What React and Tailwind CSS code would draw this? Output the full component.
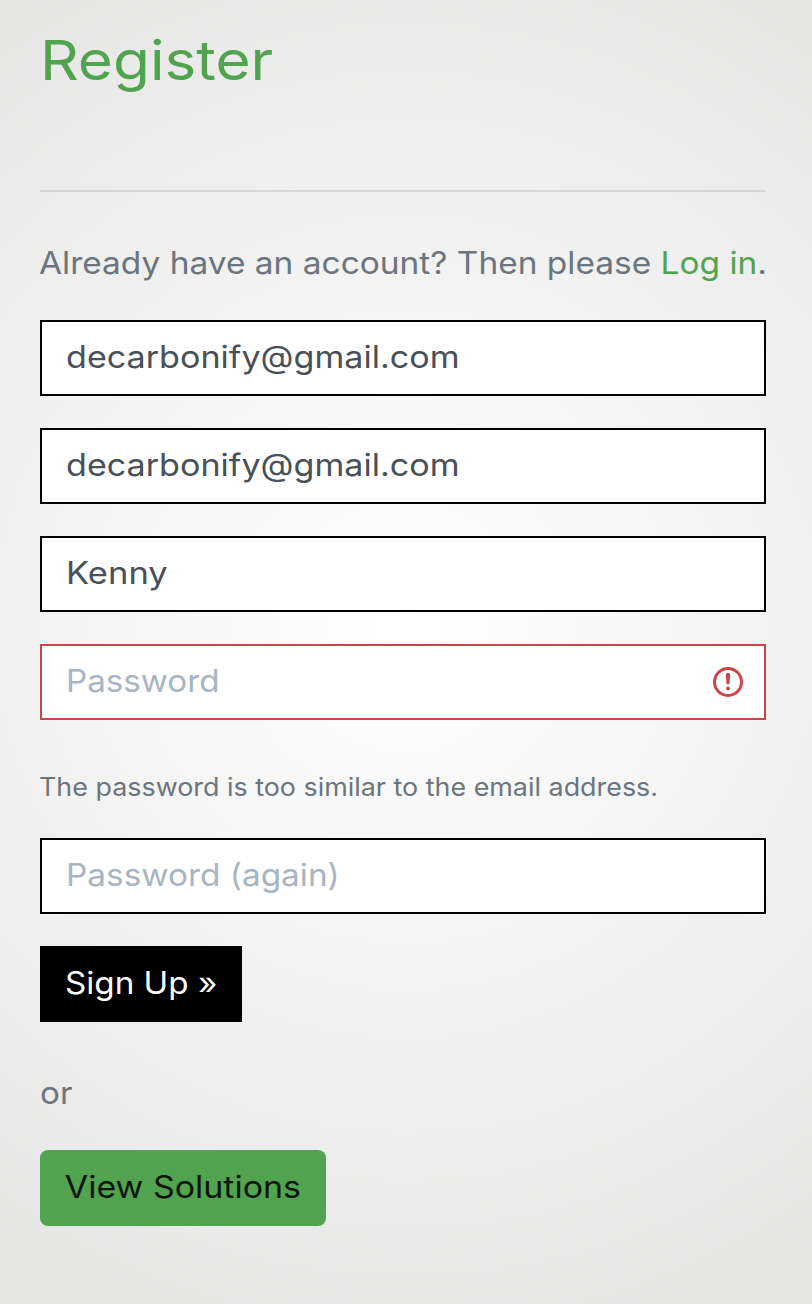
function Field({ type = "text", invalid = false, className = "", ...props }) {
  return (
    <div className={`relative h-[76px] border-2 bg-white pl-6 ${invalid ? "border-[#cb444a]" : "border-black"}`}>
      <input
        type={type}
        className={`block h-[72px] w-[560px] origin-left bg-transparent pb-1 text-[31px] leading-[48px] text-[#495057] outline-none placeholder:text-[#a9b4c2] placeholder:opacity-100 ${className}`}
        {...props}
      />
      {invalid && (
        <svg className="absolute top-5 right-5 size-8" viewBox="0 0 32 32" fill="none">
          <circle cx="16" cy="16" r="13.5" stroke="#cb444a" strokeWidth="3" />
          <path d="M13.8 8.4Q13.8 7 16 7T18.2 8.4L17.4 18.2H14.6Z" fill="#cb444a" />
          <circle cx="16" cy="22.4" r="2" fill="#cb444a" />
        </svg>
      )}
    </div>
  );
}

export default function App() {
  return (
    <main className="min-h-[1304px] bg-[radial-gradient(circle_farthest-corner_at_50%_48%,#ffffff_0%,#e4e4e3_100%)] pt-[26px] pr-[46px] pl-10 font-['Inter',sans-serif] text-[31px] leading-[48px] text-[#6c757d]">
      <h1 className="h-[68px] origin-left scale-x-[1.105] text-[54.5px] leading-[69px] text-[#52a350]">Register</h1>
      <hr className="mt-24 border-t-2 border-[#d6d6d6]" />
      <p className="mt-[47px] -ml-px w-fit origin-left scale-x-[1.079] whitespace-nowrap">
        Already have an account? Then please <a href="#login" className="text-[#52a350]">Log in</a>.
      </p>
      <form className="mt-[33px]" onSubmit={(e) => e.preventDefault()}>
        <div className="flex flex-col gap-8">
          <Field defaultValue="decarbonify@gmail.com" className="scale-x-[1.1]" />
          <Field defaultValue="decarbonify@gmail.com" className="scale-x-[1.1]" />
          <Field defaultValue="Kenny" className="scale-x-[1.115]" />
          <Field type="password" placeholder="Password" className="scale-x-[1.07]" invalid />
        </div>
        <p className="mt-12 mb-[31px] -ml-px h-[39px] w-fit origin-left scale-x-[1.075] text-[25px] leading-[39px] whitespace-nowrap">
          The password is too similar to the email address.
        </p>
        <Field type="password" placeholder="Password (again)" className="scale-x-[1.076]" />
        <button className="mt-8 flex h-[76px] w-[202px] items-center justify-center bg-black pb-0.5 whitespace-nowrap text-white">
          <span className="scale-x-[1.07]">Sign Up »</span>
        </button>
      </form>
      <p className="mt-[47px] w-fit origin-left scale-x-[1.07]">or</p>
      <a href="#solutions" className="mt-[33px] flex h-[76px] w-[286px] items-center justify-center rounded-lg bg-[#52a350] pb-0.5 whitespace-nowrap text-[#0b1508]">
        <span className="scale-x-[1.095]">View Solutions</span>
      </a>
    </main>
  );
}
